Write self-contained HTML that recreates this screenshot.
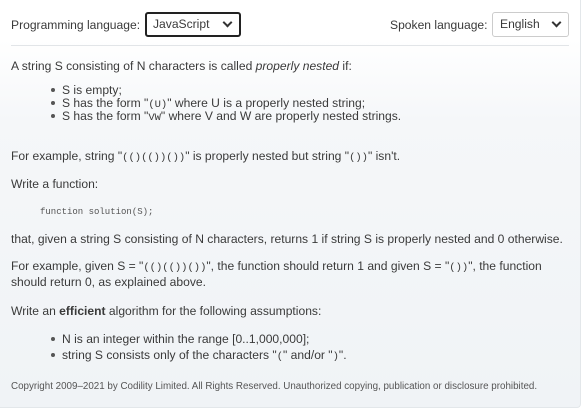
<!DOCTYPE html>
<html><head><meta charset="utf-8"><style>
*{margin:0;padding:0;box-sizing:border-box}
body{width:583px;height:411px;background:#fff;font-family:"Liberation Sans",sans-serif;color:#3a3a3a;font-size:12.1px;position:relative;overflow:hidden}
.panel{position:absolute;left:0;top:0;width:581px;height:408px;background:linear-gradient(#fff 0,#fff 40px,#f5f7f9 120px,#f0f3f6 100%);border-right:1px solid #e3e7ea;border-bottom:1px solid #e3e7ea;border-radius:0 0 4px 0}
.t{position:absolute;left:11px;white-space:nowrap;line-height:14px}
.b{left:62px}
.b:before{content:"";position:absolute;left:-11px;top:5px;width:4px;height:4px;border-radius:50%;background:#555}
.m{font-family:"Liberation Mono",monospace;font-size:10.5px}
.code{font-family:"Liberation Mono",monospace;font-size:9px;color:#555;left:40px}
.sel{position:absolute;height:25px;border-radius:3px;background:#fff;line-height:23px;padding-left:7px}
.chev{position:absolute;right:8px;top:7px;width:7px;height:7px;border-right:2px solid #333;border-bottom:2px solid #333;transform:rotate(45deg)}
</style></head><body>
<div class="panel"></div>
<div class="t" style="top:18px">Programming language:</div>
<div class="sel" style="left:145px;top:12px;width:96px;border:2px solid #222;line-height:21px;padding-left:6px">JavaScript<span class="chev" style="top:5px"></span></div>
<div class="t" style="top:18px;left:390px">Spoken language:</div>
<div class="sel" style="left:492px;top:12px;width:77px;border:1px solid #ccc">English<span class="chev" style="top:6px"></span></div>
<div style="position:absolute;left:11px;top:45px;width:558px;height:1px;background:#e2e5e8"></div>
<div class="t" style="top:59px">A string S consisting of N characters is called <i>properly nested</i> if:</div>
<div class="t b" style="top:83px">S is empty;</div>
<div class="t b" style="top:96px">S has the form "<span class="m">(U)</span>" where U is a properly nested string;</div>
<div class="t b" style="top:109px">S has the form "<span class="m">VW</span>" where V and W are properly nested strings.</div>
<div class="t" style="top:149px">For example, string "<span class="m">(()(())())</span>" is properly nested but string "<span class="m">())</span>" isn't.</div>
<div class="t" style="top:177px">Write a function:</div>
<div class="t code" style="top:205px">function solution(S);</div>
<div class="t" style="top:232px">that, given a string S consisting of N characters, returns 1 if string S is properly nested and 0 otherwise.</div>
<div class="t" style="top:259px">For example, given S = "<span class="m">(()(())())</span>", the function should return 1 and given S = "<span class="m">())</span>", the function</div>
<div class="t" style="top:275px">should return 0, as explained above.</div>
<div class="t" style="top:304px">Write an <b>efficient</b> algorithm for the following assumptions:</div>
<div class="t b" style="top:332px">N is an integer within the range [0..1,000,000];</div>
<div class="t b" style="top:348px">string S consists only of the characters "<span class="m">(</span>" and/or "<span class="m">)</span>".</div>
<div class="t" style="top:380px;font-size:9.8px;color:#555">Copyright 2009–2021 by Codility Limited. All Rights Reserved. Unauthorized copying, publication or disclosure prohibited.</div>
</body></html>
